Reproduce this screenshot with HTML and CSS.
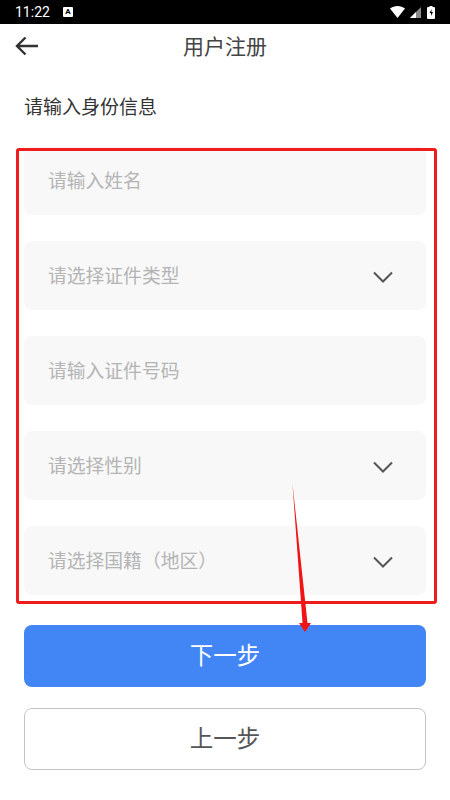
FILE: index.html
```html
<!DOCTYPE html>
<html lang="zh-CN">
<head>
    <meta charset="UTF-8">
    <meta name="viewport" content="width=device-width, initial-scale=1.0">
    <title>用户注册</title>
    <link rel="stylesheet" href="styles.css">
</head>
<body>
    <div class="screen">
        <div class="status-bar">
            <div class="status-left">
                <span class="time">11:22</span>
                <span class="notice-icon">A</span>
            </div>
            <div class="status-right">
                <svg width="15" height="12" viewBox="0 0 15 12"><path d="M0 2.6C4.2-.8 10.8-.8 15 2.6L7.5 12z" fill="#fff"/></svg>
                <svg width="12" height="12" viewBox="0 0 12 12"><path d="M12 1V12H1z" fill="#8a8a8a"/><path d="M7 6V12H1z" fill="#fff"/></svg>
                <svg class="battery" width="8" height="13" viewBox="0 0 8 13"><path d="M2.5 0h3v1H7a1 1 0 0 1 1 1v10a1 1 0 0 1-1 1H1a1 1 0 0 1-1-1V2a1 1 0 0 1 1-1h1.5z" fill="#fff"/><path d="M4.6 3L2.5 7H4v3l2-4H4.4z" fill="#000"/></svg>
            </div>
        </div>

        <header class="title-bar">
            <svg class="back-icon" width="24" height="20" viewBox="0 0 24 20"><path d="M23 10H2M10.5 1.5L2 10l8.5 8.5" fill="none" stroke="#333" stroke-width="2.4"/></svg>
            <h1>用户注册</h1>
        </header>

        <p class="section-title">请输入身份信息</p>

        <div class="fields">
            <div class="field"><span class="field-label">请输入姓名</span></div>
            <div class="field">
                <span class="field-label">请选择证件类型</span>
                <svg class="chevron" width="20" height="12" viewBox="0 0 20 12"><path d="M1 1.5l9 9 9-9" fill="none" stroke="#555" stroke-width="2"/></svg>
            </div>
            <div class="field"><span class="field-label">请输入证件号码</span></div>
            <div class="field">
                <span class="field-label">请选择性别</span>
                <svg class="chevron" width="20" height="12" viewBox="0 0 20 12"><path d="M1 1.5l9 9 9-9" fill="none" stroke="#555" stroke-width="2"/></svg>
            </div>
            <div class="field">
                <span class="field-label">请选择国籍（地区）</span>
                <svg class="chevron" width="20" height="12" viewBox="0 0 20 12"><path d="M1 1.5l9 9 9-9" fill="none" stroke="#555" stroke-width="2"/></svg>
            </div>
        </div>

        <div class="actions">
            <button class="btn btn-primary">下一步</button>
            <button class="btn btn-secondary">上一步</button>
        </div>

        <!-- red annotation drawn over the form -->
        <div class="mark-box"></div>
        <svg class="mark-arrow" width="30" height="152" viewBox="0 0 30 152"><path d="M7.5 0L17.500 139H14L20 148L26 139H22.500z" fill="#f01414"/></svg>
    </div>
</body>
</html>
```

FILE: styles.css
```css
* {
    box-sizing: border-box;
}

body {
    margin: 0;
    font-family: "Roboto", "Noto Sans CJK SC", sans-serif;
    background-color: #fff;
    color: #333;
}

.screen {
    position: relative;
    width: 450px;
    height: 800px;
    overflow: hidden;
}

.status-bar {
    height: 24px;
    padding: 0 15px;
    background-color: #000;
    color: #fff;
    display: flex;
    justify-content: space-between;
    align-items: center;
}

.status-left {
    display: flex;
    align-items: center;
    gap: 13px;
}

.time {
    font-size: 14px;
}

.notice-icon {
    width: 10px;
    height: 10px;
    border-radius: 1px;
    background-color: #fff;
    color: #000;
    font-size: 8px;
    font-weight: 700;
    line-height: 10px;
    text-align: center;
}

.status-right {
    display: flex;
    align-items: center;
    gap: 4px;
}

.battery {
    margin-left: 2px;
}

.title-bar {
    position: relative;
    height: 46px;
    padding-bottom: 4px;
    display: flex;
    justify-content: center;
    align-items: center;
}

.title-bar h1 {
    margin: 0;
    font-size: 21px;
    font-weight: 400;
    color: #444;
}

.back-icon {
    position: absolute;
    left: 15px;
    top: 12px;
}

.section-title {
    margin: 0;
    padding: 26px 24px 0;
    font-size: 19px;
    line-height: 24px;
    color: #333;
}

.fields {
    margin-top: 26px;
    padding: 0 24px;
    display: flex;
    flex-direction: column;
    gap: 26px;
}

.field {
    height: 69px;
    padding: 0 33px 0 25px;
    border-radius: 8px;
    background-color: #f8f8f8;
    color: #b4b4b4;
    font-size: 18.8px;
    display: flex;
    justify-content: space-between;
    align-items: center;
}

.field-label {
    margin-bottom: 2px;
    margin-left: -1px;
}

.chevron {
    margin-top: 2px;
}

.actions {
    margin-top: 30px;
    padding: 0 24px;
    display: flex;
    flex-direction: column;
    gap: 21px;
}

.btn {
    height: 62px;
    padding: 0 0 4px;
    border-radius: 8px;
    font-family: inherit;
    font-size: 23.5px;
}

.btn-primary {
    border: none;
    background-color: #4285f4;
    color: #fff;
}

.btn-secondary {
    border: 1px solid #c4c4c4;
    background-color: #fff;
    color: #555;
}

.mark-box {
    position: absolute;
    left: 16px;
    top: 148px;
    width: 421px;
    height: 456px;
    border: 3px solid #ee1c1c;
    border-radius: 3px;
}

.mark-arrow {
    position: absolute;
    left: 285px;
    top: 484px;
}
```
